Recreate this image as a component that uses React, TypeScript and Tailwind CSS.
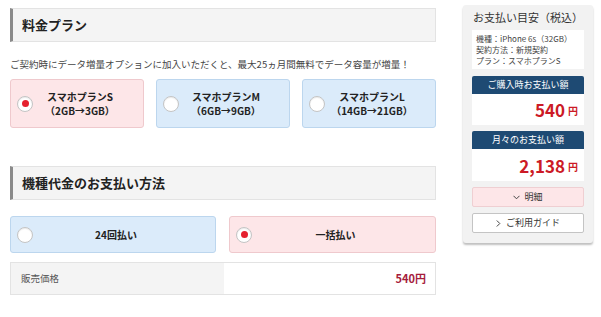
import React from "react";

const jp = { fontFamily: '"Noto Sans CJK JP", "Noto Sans", sans-serif' };

const plans = [
  { name: "スマホプランS", sub: "（2GB→3GB）", selected: true },
  { name: "スマホプランM", sub: "（6GB→9GB）", selected: false },
  { name: "スマホプランL", sub: "（14GB→21GB）", selected: false },
];

function Radio({ on }: { on: boolean }) {
  return (
    <div className="flex h-4 w-4 items-center justify-center rounded-full border border-[#c4c4c4] bg-white shadow-[inset_0_1px_1px_rgba(0,0,0,0.08)]">
      {on && <div className="h-[7px] w-[7px] rounded-full bg-[#e5202e]" />}
    </div>
  );
}

function SectionHead({ title }: { title: string }) {
  return (
    <div className="flex h-[34px] items-center border border-l-[3px] border-[#e3e3e3] border-l-[#8a8a8a] bg-[#f4f4f4] pl-[9px]">
      <h2 className="text-[13px] font-bold text-[#222]">{title}</h2>
    </div>
  );
}

export default function App() {
  return (
    <div className="flex h-[317px] w-[601px] bg-white pl-[10px] text-[#333]" style={jp}>
      {/* MAIN */}
      <div className="w-[426px] pt-[8px]">
        <SectionHead title="料金プラン" />

        <p className="mt-[16px] text-[9.5px] leading-[12px] text-[#444]">
          ご契約時にデータ増量オプションに加入いただくと、最大25ヵ月間無料でデータ容量が増量！
        </p>

        <div className="mt-[9px] grid grid-cols-3 gap-[12px]">
          {plans.map((p) => (
            <div
              key={p.name}
              className={`grid h-[49px] grid-cols-[22px_1fr_22px] items-center rounded-[3px] border pl-[6px] ${
                p.selected ? "border-[#efc9cd] bg-[#fde6e8]" : "border-[#bcd6ee] bg-[#dbebfa]"
              }`}
            >
              <Radio on={p.selected} />
              <div className="text-center text-[10px] font-bold leading-[14px] text-[#222]">
                <div>{p.name}</div>
                <div>{p.sub}</div>
              </div>
              <div />
            </div>
          ))}
        </div>

        <div className="mt-[38px]">
          <SectionHead title="機種代金のお支払い方法" />
        </div>

        <div className="mt-[16px] flex gap-[13px]">
          <div className="grid h-[37px] w-[206px] grid-cols-[22px_1fr_22px] items-center rounded-[3px] border border-[#bcd6ee] bg-[#dbebfa] pl-[6px]">
            <Radio on={false} />
            <div className="text-center text-[10px] font-bold text-[#222]">24回払い</div>
            <div />
          </div>
          <div className="grid h-[37px] flex-1 grid-cols-[22px_1fr_22px] items-center rounded-[3px] border border-[#efc9cd] bg-[#fde6e8] pl-[6px]">
            <Radio on={true} />
            <div className="text-center text-[10px] font-bold text-[#222]">一括払い</div>
            <div />
          </div>
        </div>

        <div className="mt-[9px] flex h-[33px] border border-[#e3e3e3]">
          <div className="flex w-[213px] items-center bg-[#f4f4f4] pl-[10px] text-[9.5px] text-[#555]">
            販売価格
          </div>
          <div className="flex flex-1 items-center justify-end bg-white pr-[9px] text-[11px] font-bold text-[#a61c3c]">
            540円
          </div>
        </div>
      </div>

      {/* SIDEBAR */}
      <div className="ml-[27px] mt-[5px] h-[238px] w-[130px] rounded-[3px] bg-[#f2f2f2] px-[9px] shadow-[0_2px_2px_rgba(0,0,0,0.25)]">
        <div className="flex h-[25px] items-center justify-center text-[11px] text-[#333]">
          お支払い目安（税込）
        </div>
        <div className="h-[39px] bg-white px-[4px] py-[3px] text-[8px] leading-[11px] text-[#444]">
          <div>機種：iPhone 6s（32GB）</div>
          <div>契約方法：新規契約</div>
          <div>プラン：スマホプランS</div>
        </div>

        <div className="mt-[7px] flex h-[18px] items-center justify-center rounded-t-[2px] bg-[#1e4a73] text-[9px] text-white">
          ご購入時お支払い額
        </div>
        <div className="flex h-[31px] items-center justify-end bg-white pr-[6px] text-[#cc1a26]">
          <span className="text-[17px] font-bold leading-none">540</span>
          <span className="ml-[3px] mt-[3px] text-[10px] font-bold leading-none">円</span>
        </div>

        <div className="mt-[6px] flex h-[18px] items-center justify-center rounded-t-[2px] bg-[#1e4a73] text-[9px] text-white">
          月々のお支払い額
        </div>
        <div className="flex h-[32px] items-center justify-end bg-white pr-[6px] text-[#cc1a26]">
          <span className="text-[17px] font-bold leading-none">2,138</span>
          <span className="ml-[3px] mt-[3px] text-[10px] font-bold leading-none">円</span>
        </div>

        <div className="mt-[6px] flex h-[20px] items-center justify-center gap-[4px] rounded-[2px] border border-[#efcfd2] bg-[#fde6e8] text-[9px] text-[#333]">
          <svg width="7" height="5" viewBox="0 0 7 5" fill="none" stroke="#444" strokeWidth="1">
            <path d="M0.5 0.8 L3.5 3.8 L6.5 0.8" />
          </svg>
          明細
        </div>
        <div className="mt-[6px] flex h-[20px] items-center justify-center gap-[5px] rounded-[2px] border border-[#c4c4c4] bg-white text-[9px] text-[#333]">
          <svg width="5" height="7" viewBox="0 0 5 7" fill="none" stroke="#444" strokeWidth="1">
            <path d="M0.8 0.5 L3.8 3.5 L0.8 6.5" />
          </svg>
          ご利用ガイド
        </div>
      </div>
    </div>
  );
}
